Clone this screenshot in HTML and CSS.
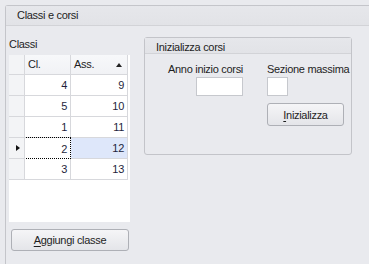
FILE: index.html
```html
<!DOCTYPE html>
<html lang="it">
<head>
  <meta charset="UTF-8" />
  <meta name="viewport" content="width=device-width, initial-scale=1.0" />
  <title>Classi e corsi</title>
  <link rel="stylesheet" href="styles.css">
</head>
<body>
  <div class="panel">
    <div class="panel-head">Classi e corsi</div>
    <div class="panel-body">
      <div class="classes">
        <div class="caption">Classi</div>
        <div class="grid">
          <div class="cell ind head"></div>
          <div class="cell head">Cl.</div>
          <div class="cell head sorted">Ass.<span class="sort-arrow"></span></div>

          <div class="cell ind"></div>
          <div class="cell num">4</div>
          <div class="cell num">9</div>

          <div class="cell ind"></div>
          <div class="cell num">5</div>
          <div class="cell num">10</div>

          <div class="cell ind"></div>
          <div class="cell num">1</div>
          <div class="cell num">11</div>

          <div class="cell ind current"><span class="row-arrow"></span></div>
          <div class="cell num focused">2</div>
          <div class="cell num selected">12</div>

          <div class="cell ind"></div>
          <div class="cell num">3</div>
          <div class="cell num">13</div>
        </div>
        <button class="btn add-btn"><u>A</u>ggiungi classe</button>
      </div>

      <div class="group">
        <div class="group-head">Inizializza corsi</div>
        <div class="group-body">
          <div class="field field-year">
            <label for="annoInizio">Anno inizio corsi</label>
            <input type="text" id="annoInizio" class="input-year">
          </div>
          <div class="field">
            <label for="sezioneMax">Sezione massima</label>
            <input type="text" id="sezioneMax" class="input-short">
            <button class="btn init-btn"><u>I</u>nizializza</button>
          </div>
        </div>
      </div>
    </div>
  </div>
</body>
</html>
```

FILE: styles.css
```css
* { box-sizing: border-box; }

body {
  margin: 0;
  padding: 5px 0 0 5px;
  height: 264px;
  overflow: hidden;
  background: #e9eaee;
  color: #1e1e1e;
  font-family: 'Liberation Sans', Arial, sans-serif;
  font-size: 11px;
  letter-spacing: -0.3px;
}

.panel {
  width: 100%;
  height: 100%;
  border-left: 1px solid #c4c5ca;
  border-top: 1px solid #c4c5ca;
  border-top-left-radius: 3px;
}

.panel-head {
  height: 20px;
  line-height: 19px;
  padding-left: 11px;
  border-bottom: 1px solid #d2d3d7;
  background: linear-gradient(#e6e7eb, #e2e3e7);
}

.panel-body {
  display: flex;
  gap: 14px;
  padding: 11px 0 0 3px;
}

.classes {
  width: 121px;
  display: flex;
  flex-direction: column;
}

.caption {
  line-height: 15px;
  margin-bottom: 3px;
}

.grid {
  display: grid;
  grid-template-columns: 16px 46px 57px;
  grid-template-rows: 20px;
  grid-auto-rows: 21px;
  align-content: start;
  height: 167px;
  background: #fff;
}

.cell {
  border-right: 1px solid #d7d8dc;
  border-bottom: 1px solid #d7d8dc;
  line-height: 20px;
  padding: 0 3px;
  color: #1f1f3d;
}

.cell.head {
  position: relative;
  background: linear-gradient(#f7f8fa, #f1f2f5);
  line-height: 19px;
  color: #1e1e1e;
}

.cell.ind {
  position: relative;
  background: #f3f4f6;
}

.num {
  text-align: right;
}

.selected {
  background: #dee7fa;
}

.focused {
  border: 1px dotted #000;
  margin-left: -1px;
  margin-top: -1px;
  height: 22px;
  padding-top: 1px;
}

.sort-arrow {
  position: absolute;
  right: 5px;
  top: 8px;
  border-left: 3.5px solid transparent;
  border-right: 3.5px solid transparent;
  border-bottom: 4px solid #222;
}

.row-arrow {
  position: absolute;
  left: 7px;
  top: 7px;
  border-top: 3.5px solid transparent;
  border-bottom: 3.5px solid transparent;
  border-left: 4px solid #111;
}

.btn {
  font: inherit;
  letter-spacing: inherit;
  color: #1e1e1e;
  background: linear-gradient(#f5f5f7, #e4e5e9);
  border: 1px solid #aeb0b6;
  border-radius: 3px;
  padding: 0;
  cursor: pointer;
}

.btn u {
  text-underline-offset: 2px;
}

.add-btn {
  width: 118px;
  height: 22px;
  margin: 7px 0 0 2px;
}

.group {
  width: 208px;
  height: 118px;
  border: 1px solid #c3c4c9;
  border-radius: 3px;
}

.group-head {
  height: 16px;
  padding: 3px 0 0 11px;
  line-height: 12px;
  border-bottom: 1px solid #d2d3d7;
  background: linear-gradient(#e6e7eb, #e2e3e7);
}

.group-body {
  display: flex;
  gap: 24px;
  padding-top: 8px;
}

.field {
  display: flex;
  flex-direction: column;
  align-items: flex-start;
}

.field-year {
  width: 98px;
  align-items: flex-end;
}

.field label {
  line-height: 15px;
  white-space: nowrap;
}

.field input {
  height: 19px;
  border: 1px solid #c6c8cd;
  background: #fff;
  padding: 0 2px;
  font: inherit;
}

.input-year {
  width: 47px;
}

.input-short {
  width: 21px;
}

.init-btn {
  width: 77px;
  height: 23px;
  margin-top: 7px;
}
```
